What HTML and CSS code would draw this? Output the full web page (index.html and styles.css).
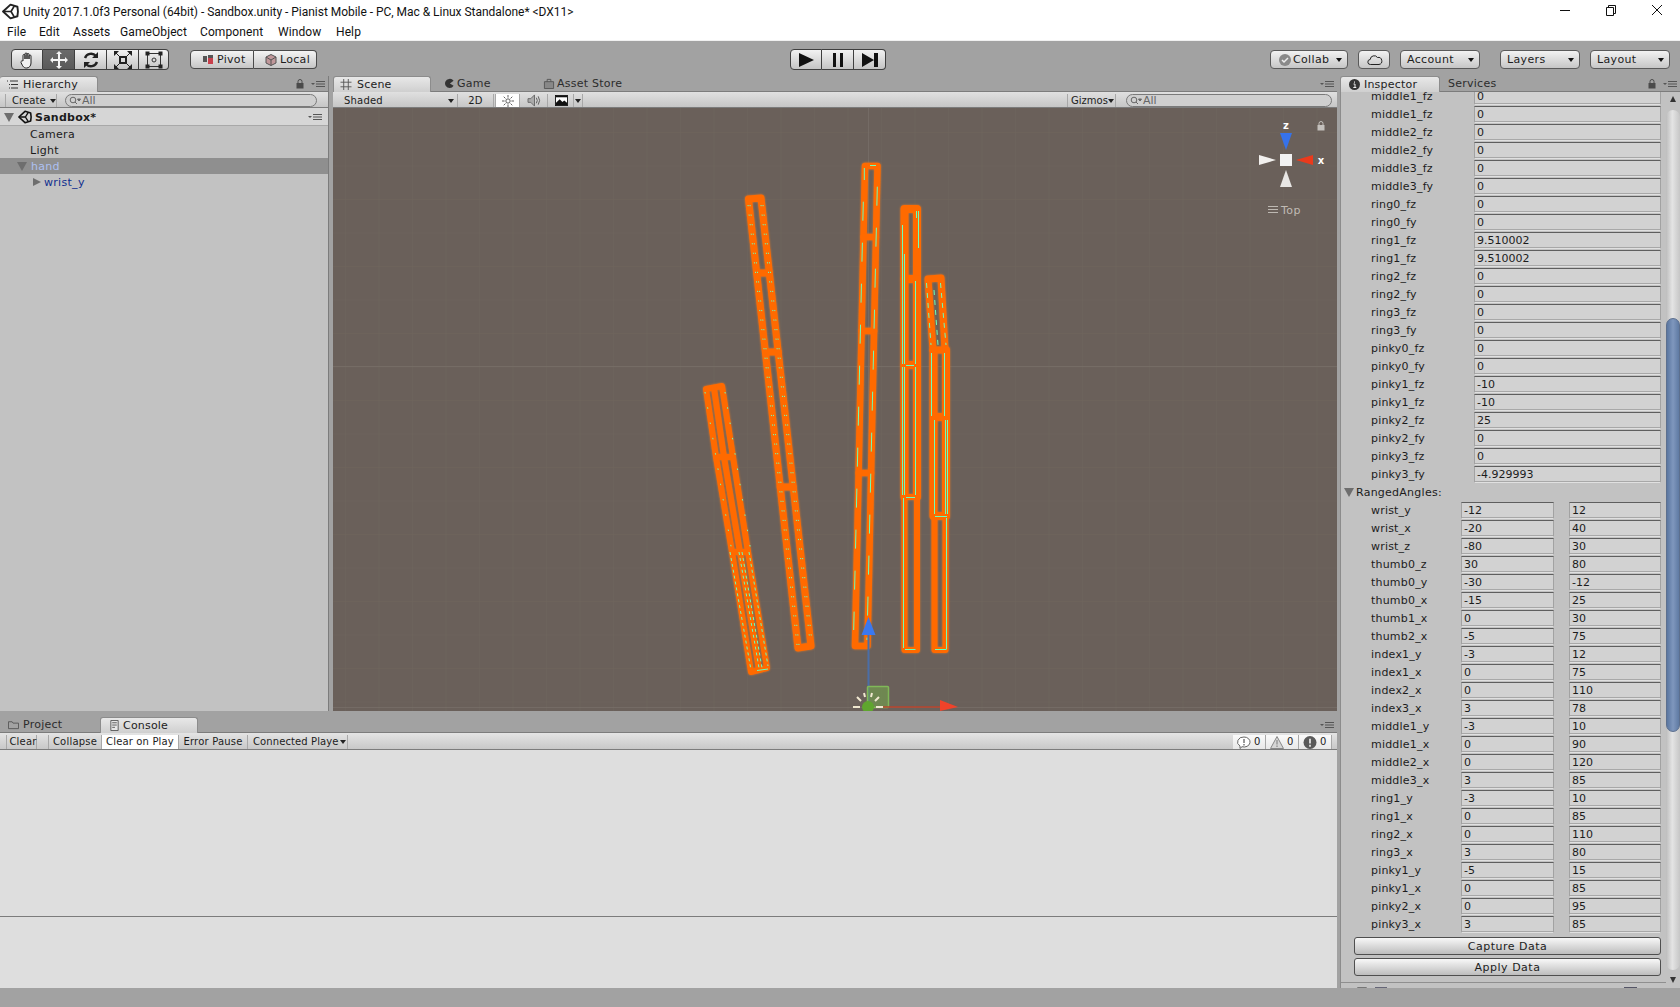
FILE: index.html
```html
<!DOCTYPE html>
<html lang="en">
<head>
<meta charset="utf-8">
<title>Unity 2017.1.0f3 Personal (64bit)</title>
<link rel="stylesheet" href="styles.css">
</head>
<body>
<svg class="defs" width="0" height="0" aria-hidden="true">
  <symbol id="menu" viewBox="0 0 14 8">
    <path d="M0 3h4L2 5z" fill="#555"/><path d="M5 1.500h9M5 4h9M5 6.500h9" stroke="#555" stroke-width="1" fill="none"/>
  </symbol>
  <symbol id="lock" viewBox="0 0 8 10">
    <path d="M2 4V2.500a2 2 0 0 1 4 0V4" fill="none" stroke="currentColor" stroke-width="1"/><rect x="0.500" y="4" width="7" height="5.500" fill="currentColor"/>
  </symbol>
  <symbol id="unity" viewBox="0 0 16 16">
    <path d="M8 1.500 14.500 3.500 15 8 14.500 12.500 8 14.500 1 8z" fill="none" stroke="currentColor" stroke-width="1.800" stroke-linejoin="round"/>
    <path d="M1.500 8H8.500M8.500 8 11.500 3M8.500 8 11.500 13" stroke="currentColor" stroke-width="1.600" fill="none"/>
  </symbol>
</svg>

<header class="titlebar">
  <svg class="title-logo"><use href="#unity"/></svg>
  <span class="title-text">Unity 2017.1.0f3 Personal (64bit) - Sandbox.unity - Pianist Mobile - PC, Mac &amp; Linux Standalone* &lt;DX11&gt;</span>
  <div class="winbtns">
    <svg class="winbtn" viewBox="0 0 46 20"><path d="M18 10.500h10" stroke="#111" fill="none"/></svg>
    <svg class="winbtn" viewBox="0 0 46 20"><path d="M18.500 7.500h7v8h-7zM20.500 7.500v-2h7v8h-2" stroke="#111" fill="none"/></svg>
    <svg class="winbtn" viewBox="0 0 46 20"><path d="M18 5l10 10M28 5l-10 10" stroke="#111" fill="none"/></svg>
  </div>
</header>

<nav class="menubar">
  <span class="m-file">File</span><span class="m-edit">Edit</span><span class="m-assets">Assets</span><span class="m-go">GameObject</span><span class="m-comp">Component</span><span class="m-win">Window</span><span>Help</span>
</nav>

<section class="toolbar">
  <div class="btngroup tools">
    <button class="tb"><svg viewBox="0 0 20 20"><path d="M6 11V5.500a1 1 0 0 1 2 0V9 4a1 1 0 0 1 2 0v5-4.500a1 1 0 0 1 2 0V9 6a1 1 0 0 1 2 0v7c0 3-2 5-4.500 5S6 17 4 12.500c-.5-1.500 1.500-2 2-1.500z" fill="#f2f2f2" stroke="#222"/></svg></button>
    <button class="tb tb-on"><svg viewBox="0 0 20 20"><path d="M10 1l3 3h-2v5h5V7l3 3-3 3v-2h-5v5h2l-3 3-3-3h2v-5H4v2l-3-3 3-3v2h5V4H7z" fill="#f4f4f4"/></svg></button>
    <button class="tb"><svg viewBox="0 0 20 20"><path d="M4 8a6.500 6.500 0 0 1 11-2M16 12a6.500 6.500 0 0 1-11 2" fill="none" stroke="#222" stroke-width="2.400"/><path d="M17 2v6h-6zM3 18v-6h6z" fill="#222"/></svg></button>
    <button class="tb"><svg viewBox="0 0 20 20"><rect x="7" y="7" width="6" height="6" fill="none" stroke="#222" stroke-width="2"/><path d="M1 1h5L1 6zM19 1v5l-5-5zM1 19v-5l5 5zM19 19h-5l5-5z" fill="#222"/><path d="M3 3l4 4M17 3l-4 4M3 17l4-4M17 17l-4-4" stroke="#222"/></svg></button>
    <button class="tb"><svg viewBox="0 0 20 20"><path d="M3.500 3v14M16.500 3v14M3 3.500h14M3 16.500h14" stroke="#333"/><circle cx="10" cy="10" r="2" fill="none" stroke="#333"/><path d="M1.500 1.500h4v4h-4zM14.500 1.500h4v4h-4zM1.500 14.500h4v4h-4zM14.500 14.500h4v4h-4z" fill="#222"/></svg></button>
  </div>
  <div class="btngroup pivots">
    <button class="pb pb-pivot"><svg class="pico" viewBox="0 0 12 12"><rect x="1" y="2" width="4" height="6" fill="#555"/><rect x="6" y="1" width="5" height="9" fill="#555"/><rect x="6" y="4" width="5" height="6" fill="#c8404c"/></svg>Pivot</button>
    <button class="pb pb-local"><svg class="pico" viewBox="0 0 12 12"><path d="M6 .5 11 3v6L6 11.500 1 9V3z" fill="#c0979a" stroke="#555"/><path d="M1 3l5 3 5-3M6 6v5.500" stroke="#555" fill="none"/></svg>Local</button>
  </div>
  <div class="btngroup play">
    <button class="pl"><svg viewBox="0 0 18 14"><path d="M2 0 17 7 2 14z" fill="#111"/></svg></button>
    <button class="pl"><svg viewBox="0 0 18 14"><path d="M4 0h3v14H4zM11 0h3v14h-3z" fill="#111"/></svg></button>
    <button class="pl"><svg viewBox="0 0 18 14"><path d="M1 0 13 7 1 14zM13 0h4v14h-4z" fill="#111"/></svg></button>
  </div>
  <div class="right-tools">
    <button class="dd dd-collab"><svg class="pico" viewBox="0 0 12 12"><circle cx="6" cy="6" r="6" fill="#8a8a8a"/><path d="M3 6l2 2 4-4" stroke="#eee" stroke-width="1.500" fill="none"/></svg>Collab<i class="tri tri-k"></i></button>
    <button class="dd dd-cloud"><svg viewBox="0 0 16 10"><path d="M3.500 9.500a2.500 2.500 0 0 1-.3-5A4 4 0 0 1 10.500 2.500 3.500 3.500 0 0 1 12 9.500z" fill="none" stroke="#222"/></svg></button>
    <button class="dd dd-acc">Account<i class="tri tri-k"></i></button>
    <button class="dd dd-lay">Layers<i class="tri tri-k"></i></button>
    <button class="dd dd-lout">Layout<i class="tri tri-k"></i></button>
  </div>
</section>

<main class="dock">
  <div class="left">
    <div class="top">
      <section class="hier">
        <div class="tabbar">
          <div class="tab tab-hier"><svg class="tabico" viewBox="0 0 12 10"><path d="M1 1.500h1M4 1.500h8M3 5h1M5 5h7M3 8.500h1M5 8.500h7" stroke="#333" fill="none"/></svg>Hierarchy</div>
          <div class="tabtools"><svg class="ic-lock"><use href="#lock"/></svg><svg class="ic-menu"><use href="#menu"/></svg></div>
        </div>
        <div class="subbar">
          <div class="sb-btn sb-create">Create<i class="tri"></i></div>
          <div class="search search-h"><svg class="sico" viewBox="0 0 12 10"><circle cx="4" cy="4" r="2.800" fill="none" stroke="#666"/><path d="M6 6l2 2M8.500 3h3L10 5z" stroke="#666" fill="#666"/></svg>All</div>
        </div>
        <div class="hrow-scene">
          <i class="arrow-down"></i>
          <svg class="scene-logo"><use href="#unity"/></svg>
          <b>Sandbox*</b>
          <svg class="ic-menu ic-menu-end"><use href="#menu"/></svg>
        </div>
        <div class="hrow hrow-l1">Camera</div>
        <div class="hrow hrow-l1">Light</div>
        <div class="hrow hrow-sel"><i class="arrow-down arrow-sm"></i><span>hand</span></div>
        <div class="hrow hrow-l2"><i class="arrow-right"></i><span>wrist_y</span></div>
      </section>
      <section class="scene">
        <div class="tabbar">
          <div class="tab tab-scene"><svg class="tabico" viewBox="0 0 12 12"><path d="M3.500 0v12M8.500 0v12M0 3.500h12M0 8.500h12" stroke="#555" fill="none"/></svg>Scene</div>
          <div class="tab-off tab-game"><svg class="tabico" viewBox="0 0 12 12"><path d="M6 1a5 5 0 1 0 5 7.500L7 6l4-3A5 5 0 0 0 6 1z" fill="#333"/></svg>Game</div>
          <div class="tab-off tab-store"><svg class="tabico" viewBox="0 0 12 12"><path d="M1 4h10v7.500H1z" fill="#888" stroke="#555"/><path d="M4 4V1.500h4V4" fill="none" stroke="#555"/></svg>Asset Store</div>
          <div class="tabtools tabtools-end"><svg class="ic-menu"><use href="#menu"/></svg></div>
        </div>
        <div class="subbar subbar-scene">
          <div class="sb-btn sb-shaded">Shaded<i class="tri"></i></div>
          <div class="sb-btn sb-2d">2D</div>
          <div class="sb-btn sb-sun"><svg viewBox="0 0 14 14"><circle cx="7" cy="7" r="2.500" fill="none" stroke="#444"/><path d="M7 0v3M7 11v3M0 7h3M11 7h3M2 2l2 2M10 10l2 2M12 2l-2 2M4 10l-2 2" stroke="#444" fill="none"/></svg></div>
          <div class="sb-btn sb-audio"><svg viewBox="0 0 16 14"><path d="M1 5h3l4-4v12L4 9H1z" fill="#aaa" stroke="#666"/><path d="M10 4q2 3 0 6M12 2.500q3 4.500 0 9" fill="none" stroke="#555"/></svg></div>
          <div class="sb-btn sb-img"><svg viewBox="0 0 14 12"><rect x=".5" y=".5" width="13" height="11" fill="#fff" stroke="#111"/><path d="M1 11V8.500L5 4.500 8 7.500 10 6 13 8.500V11z" fill="#111"/><path d="M1 1h12v1.500H1z" fill="#111"/></svg></div>
          <div class="sb-btn sb-imgdd"><i class="tri"></i></div>
          <div class="sb-fill"></div>
          <div class="sb-btn sb-gizmos">Gizmos<i class="tri"></i></div>
          <div class="search search-s"><svg class="sico" viewBox="0 0 12 10"><circle cx="4" cy="4" r="2.800" fill="none" stroke="#666"/><path d="M6 6l2 2M8.500 3h3L10 5z" stroke="#666" fill="#666"/></svg>All</div>
        </div>
        <svg class="view" viewBox="333 108 1004 603" preserveAspectRatio="none">
          <defs>
            <pattern id="grid" x="345" y="132" width="33.500" height="33.500" patternUnits="userSpaceOnUse">
              <path d="M0 0V33.500M0 0H33.500" stroke="#72695f" stroke-opacity=".55" fill="none"/>
            </pattern>
          </defs>
          <rect x="333" y="108" width="1004" height="603" fill="url(#grid)"/>
          <path class="major" d="M333 366.500H1337M868.500 108V711M333 707.500H1337"/>

          <g class="fingers">
            <!-- thumb -->
            <g class="leg6">
              <path d="M706 389 716 457 732 552 751 672 767 668 748 552 733 457 722 386Z"/>
              <path d="M714 388 724 457 740 552 759 670"/>
              <path d="M716 457H733M732 552H748"/>
            </g>
            <!-- index -->
            <g class="leg7">
              <path d="M748.500 199 761 198 811 646 798 648Z"/>
              <path d="M756.700 273H769.400M765.400 352H778.200M780.200 487H793.200"/>
            </g>
            <!-- middle -->
            <g class="leg65">
              <path d="M865 166H877.500L867.500 646H855Z"/>
              <path d="M863.500 237H876M861.600 331H874.100M858.600 473H871.100"/>
            </g>
            <!-- ring -->
            <g class="leg8">
              <path d="M904.500 497V209H917V497"/>
              <path d="M904.500 279H917M904.500 365H917"/>
            </g>
            <g class="leg6">
              <path d="M904.500 497H917V650H904.500Z"/>
            </g>
            <!-- pinky -->
            <g class="leg7">
              <path d="M933 350 928 279 941 278 945 350"/>
              <path d="M933 350H946"/>
            </g>
            <g class="leg8">
              <path d="M933.500 516V350M946 516V350M933.500 417H946M933.500 516H946"/>
            </g>
            <g class="leg6">
              <path d="M934.500 516V650H945.500V516"/>
            </g>
          </g>

          <g class="cyan">
            <!-- middle dashes -->
            <path class="d-mid" d="M864.300 168V180"/>
            <path class="d-mid-line" d="M863.300 201.700 853.700 630"/>
            <path class="d-mid-line" d="M877.300 186.700 867 640"/>
            <path d="M870 165.500H876"/>
            <!-- ring lines -->
            <path d="M902.500 225V364M902.500 367V495M904.500 254V364M904.500 367V495M915.500 281V364M915.500 367V495M918.500 211V248M916.500 211V218"/>
            <path d="M903.500 498V648M905 649.500H915.500M906 365.500H914M906 497.500H915"/>
            <!-- pinky lines -->
            <path d="M931.500 353V416M944.500 353V416M934.500 420V514M945.500 420V514M947.500 420V514"/>
            <path d="M946.500 518V649M935 649.500H946.500M935 516.500H947"/>
            <path class="d-pk" d="M926.500 283 931 345"/>
            <path class="d-pk" d="M940.500 283 946 345"/>
            <path class="d-pk" d="M934 290 938 345"/>
            <!-- index dots -->
            <path class="d-dot" d="M748 205 797 645"/><path class="d-dot" d="M750 205 799 645"/>
            <path class="d-dot" d="M761 205 810 642"/><path class="d-dot" d="M763 205 812 642"/>
            <!-- thumb dots -->
            <path class="d-dot2" d="M705 392 732 552"/>
            <path class="d-dot2" d="M725 392 751 552"/>
            <path class="d-dash" d="M730 552 751 670"/>
            <path class="d-dash" d="M739 552 759 668"/>
            <path class="d-dash" d="M742 552 762 668"/>
            <path class="d-dash" d="M749 552 768 666"/>
            <path d="M757 670.500 768 669"/>
          </g>

          <!-- move gizmo -->
          <path class="axis-blue" d="M868.500 635V706"/>
          <path class="arrow-blue" d="M868.500 617 861.500 635H875.500Z"/>
          <rect class="plane" x="867.500" y="686.500" width="21" height="21" rx="1"/>
          <path class="axis-red" d="M880 707H942"/>
          <path class="arrow-red" d="M940 700 958 707 940 711Z"/>
          <circle class="light-c" cx="868" cy="707" r="6"/>
          <path class="rays" d="M853 707H860M876 707H883M857 697l4 4M879 697l-4 4M864 693l1 4M872 693l-1 4"/>

          <!-- view gizmo -->
          <path class="vg-blue" d="M1280 133H1292L1286 150Z"/>
          <path class="vg-white" d="M1259 155V165L1276 160Z"/>
          <path class="vg-red" d="M1313 155V165L1296 160Z"/>
          <path class="vg-white2" d="M1286 170 1280 187H1292Z"/>
          <rect class="vg-cube" x="1280" y="154" width="12" height="12"/>
          <text class="vg-lab" x="1286" y="129">z</text>
          <text class="vg-lab" x="1321" y="164">x</text>
          <svg x="1317" y="121" width="8" height="10" class="vg-lock"><use href="#lock"/></svg>
          <path class="vg-lines" d="M1268 206.500H1278M1268 209.500H1278M1268 212.500H1278"/>
          <text class="vg-top" x="1281" y="214">Top</text>
        </svg>
      </section>
    </div>
    <section class="bottom">
      <div class="tabbar tabbar-b">
        <div class="tab-off tab-project"><svg class="tabico" viewBox="0 0 12 10"><path d="M.5 2h4l1 1.500h6v6H.5z" fill="none" stroke="#555"/></svg>Project</div>
        <div class="tab tab-console"><svg class="tabico" viewBox="0 0 9 12"><path d="M.5.5h8v11h-8z" fill="#e6e6e6" stroke="#555"/><path d="M2 3h5M2 5.500h5M2 8h3" stroke="#555"/></svg>Console</div>
        <div class="tabtools tabtools-end"><svg class="ic-menu"><use href="#menu"/></svg></div>
      </div>
      <div class="subbar subbar-console">
        <div class="sb-btn c-clear">Clear</div>
        <div class="sb-btn c-collapse">Collapse</div>
        <div class="sb-btn c-cop">Clear on Play</div>
        <div class="sb-btn c-err">Error Pause</div>
        <div class="sb-btn c-conn"><span class="clip">Connected Player</span><i class="tri"></i></div>
        <div class="sb-fill"></div>
        <div class="sb-btn c-count"><svg viewBox="0 0 14 13"><path d="M7 1a6 5 0 1 1-2 9.700L3 12.500V10A6 5 0 0 1 7 1z" fill="#fff" stroke="#666"/><path d="M7 3v4M7 8v1.500" stroke="#777" stroke-width="1.500"/></svg>0</div>
        <div class="sb-btn c-count"><svg viewBox="0 0 14 13"><path d="M7 .5 13.500 12.500H.5z" fill="#d6d6d6" stroke="#888"/><path d="M7 4v4.500M7 9.500V11" stroke="#999" stroke-width="1.500"/></svg>0</div>
        <div class="sb-btn c-count"><svg viewBox="0 0 14 14"><circle cx="7" cy="7" r="7" fill="#5a5a5a"/><path d="M7 3v5M7 9.500V11.500" stroke="#ddd" stroke-width="2"/></svg>0</div>
      </div>
      <div class="log"></div>
      <div class="log-detail"></div>
    </section>
  </div>

  <aside class="insp">
    <div class="tabbar tabbar-i">
      <div class="tab tab-insp"><svg class="tabico" viewBox="0 0 11 11"><circle cx="5.500" cy="5.500" r="5.500" fill="#333"/><path d="M5.500 2.500v1.200M4.500 5H6v3.500M4.300 8.500h3" stroke="#eee" fill="none"/></svg>Inspector</div>
      <div class="tab-off tab-serv">Services</div>
      <div class="tabtools tabtools-end"><svg class="ic-lock"><use href="#lock"/></svg><svg class="ic-menu"><use href="#menu"/></svg></div>
    </div>
    <div class="ibody">
      <div class="icontent">
        <div class="rows">
          <div class="row"><label>middle1_fz</label><span class="f">0</span></div>
          <div class="row"><label>middle1_fz</label><span class="f">0</span></div>
          <div class="row"><label>middle2_fz</label><span class="f">0</span></div>
          <div class="row"><label>middle2_fy</label><span class="f">0</span></div>
          <div class="row"><label>middle3_fz</label><span class="f">0</span></div>
          <div class="row"><label>middle3_fy</label><span class="f">0</span></div>
          <div class="row"><label>ring0_fz</label><span class="f">0</span></div>
          <div class="row"><label>ring0_fy</label><span class="f">0</span></div>
          <div class="row"><label>ring1_fz</label><span class="f">9.510002</span></div>
          <div class="row"><label>ring1_fz</label><span class="f">9.510002</span></div>
          <div class="row"><label>ring2_fz</label><span class="f">0</span></div>
          <div class="row"><label>ring2_fy</label><span class="f">0</span></div>
          <div class="row"><label>ring3_fz</label><span class="f">0</span></div>
          <div class="row"><label>ring3_fy</label><span class="f">0</span></div>
          <div class="row"><label>pinky0_fz</label><span class="f">0</span></div>
          <div class="row"><label>pinky0_fy</label><span class="f">0</span></div>
          <div class="row"><label>pinky1_fz</label><span class="f">-10</span></div>
          <div class="row"><label>pinky1_fz</label><span class="f">-10</span></div>
          <div class="row"><label>pinky2_fz</label><span class="f">25</span></div>
          <div class="row"><label>pinky2_fy</label><span class="f">0</span></div>
          <div class="row"><label>pinky3_fz</label><span class="f">0</span></div>
          <div class="row"><label>pinky3_fy</label><span class="f">-4.929993</span></div>
          <div class="row row-head"><i class="arrow-down arrow-sm"></i>RangedAngles:</div>
          <div class="row r2"><label>wrist_y</label><span class="f">-12</span><span class="f">12</span></div>
          <div class="row r2"><label>wrist_x</label><span class="f">-20</span><span class="f">40</span></div>
          <div class="row r2"><label>wrist_z</label><span class="f">-80</span><span class="f">30</span></div>
          <div class="row r2"><label>thumb0_z</label><span class="f">30</span><span class="f">80</span></div>
          <div class="row r2"><label>thumb0_y</label><span class="f">-30</span><span class="f">-12</span></div>
          <div class="row r2"><label>thumb0_x</label><span class="f">-15</span><span class="f">25</span></div>
          <div class="row r2"><label>thumb1_x</label><span class="f">0</span><span class="f">30</span></div>
          <div class="row r2"><label>thumb2_x</label><span class="f">-5</span><span class="f">75</span></div>
          <div class="row r2"><label>index1_y</label><span class="f">-3</span><span class="f">12</span></div>
          <div class="row r2"><label>index1_x</label><span class="f">0</span><span class="f">75</span></div>
          <div class="row r2"><label>index2_x</label><span class="f">0</span><span class="f">110</span></div>
          <div class="row r2"><label>index3_x</label><span class="f">3</span><span class="f">78</span></div>
          <div class="row r2"><label>middle1_y</label><span class="f">-3</span><span class="f">10</span></div>
          <div class="row r2"><label>middle1_x</label><span class="f">0</span><span class="f">90</span></div>
          <div class="row r2"><label>middle2_x</label><span class="f">0</span><span class="f">120</span></div>
          <div class="row r2"><label>middle3_x</label><span class="f">3</span><span class="f">85</span></div>
          <div class="row r2"><label>ring1_y</label><span class="f">-3</span><span class="f">10</span></div>
          <div class="row r2"><label>ring1_x</label><span class="f">0</span><span class="f">85</span></div>
          <div class="row r2"><label>ring2_x</label><span class="f">0</span><span class="f">110</span></div>
          <div class="row r2"><label>ring3_x</label><span class="f">3</span><span class="f">80</span></div>
          <div class="row r2"><label>pinky1_y</label><span class="f">-5</span><span class="f">15</span></div>
          <div class="row r2"><label>pinky1_x</label><span class="f">0</span><span class="f">85</span></div>
          <div class="row r2"><label>pinky2_x</label><span class="f">0</span><span class="f">95</span></div>
          <div class="row r2"><label>pinky3_x</label><span class="f">3</span><span class="f">85</span></div>
        </div>
        <button class="ibtn ibtn-first">Capture Data</button>
        <button class="ibtn">Apply Data</button>
        <div class="compfoot">
          <svg class="cf-doc" viewBox="0 0 13 8"><path d="M.5 8V.5h9l3 3V8" fill="#eee" stroke="#777"/></svg>
          <svg class="cf-chk" viewBox="0 0 12 8"><rect x=".5" y=".5" width="11" height="8" fill="#c6d4e4" stroke="#667"/></svg>
          <span class="cf-fill"></span>
          <svg class="cf-blue" viewBox="0 0 13 8"><rect x=".5" y=".5" width="12" height="8" fill="#b8cce0" stroke="#556"/></svg>
          <svg class="cf-gear" viewBox="0 0 8 8"><path d="M2 1h4v7H2z" fill="#666"/></svg>
        </div>
      </div>
      <div class="scrollbar">
        <i class="sc-up"></i>
        <div class="sc-track">
          <div class="sc-thumb"></div>
        </div>
        <i class="sc-down"></i>
      </div>
    </div>
  </aside>
</main>
<footer class="status"></footer>
</body>
</html>
```
FILE: styles.css
```css
* { box-sizing: border-box; }
html, body { margin: 0; padding: 0; }
body {
  width: 1680px; height: 1007px; overflow: hidden;
  display: flex; flex-direction: column;
  background: #a2a2a2; color: #1c1c1c;
  font: 11px/1 "DejaVu Sans", sans-serif;
}
button { font: inherit; color: inherit; padding: 0; margin: 0; }
i { display: block; font-style: normal; }
svg { display: block; flex: none; }
.defs { position: absolute; }

/* title bar */
.titlebar { height: 20px; background: #fff; display: flex; align-items: center; padding-left: 2px; flex: none; }
.title-logo { width: 17px; height: 17px; color: #222; margin-right: 4px; margin-top: 2px; }
.title-text { font: 12px/20px Roboto, sans-serif; color: #111; white-space: nowrap; margin-top: 3px; letter-spacing: -.03px; }
.winbtns { margin-left: auto; display: flex; }
.winbtn { width: 46px; height: 20px; }

/* menu bar */
.menubar { height: 21px; background: #fff; border-bottom: 1px solid #f0f0f0; display: flex; align-items: center; padding: 3px 0 0 7px; flex: none; font: 12px/18px Roboto, sans-serif; color: #111; letter-spacing: .1px; }
.m-file { width: 32px; } .m-edit { width: 34px; } .m-assets { width: 47px; } .m-go { width: 80px; } .m-comp { width: 78px; } .m-win { width: 58px; }

/* main toolbar */
.toolbar { height: 35px; flex: none; display: flex; align-items: flex-start; background: #a2a2a2; position: relative; padding-left: 11px; }
.btngroup { display: flex; }
.tools { margin-top: 8px; height: 21px; }
.tb { width: 32px; height: 21px; border: 1px solid #3f3f3f; border-left-width: 0; background: linear-gradient(#f4f4f4, #c4c4c4); display: flex; align-items: center; justify-content: center; }
.tb:first-child { border-left-width: 1px; border-radius: 4px 0 0 4px; }
.tb:last-child { border-radius: 0 4px 4px 0; width: 30px; }
.tb svg { width: 20px; height: 20px; }
.tb-on { background: linear-gradient(#6a6a6a, #5a5a5a); }
.pivots { margin: 9px 0 0 21px; height: 19px; }
.pb { height: 19px; border: 1px solid #4a4a4a; background: linear-gradient(#f4f4f4, #c6c6c6); display: flex; align-items: center; letter-spacing: .3px; }
.pico { width: 12px; height: 12px; margin-right: 3px; }
.pb-pivot { width: 64px; border-radius: 4px 0 0 4px; padding-left: 11px; }
.pb-local { width: 63px; border-left-width: 0; border-radius: 0 4px 4px 0; padding-left: 11px; }
.play { margin: 8px 0 0 473px; height: 21px; }
.pl { width: 32px; height: 21px; border: 1px solid #3f3f3f; border-left-width: 0; background: linear-gradient(#f2f2f2, #c4c4c4); display: flex; align-items: center; justify-content: center; }
.pl:first-child { border-left-width: 1px; border-radius: 4px 0 0 4px; }
.pl:last-child { border-radius: 0 4px 4px 0; }
.pl svg { width: 18px; height: 14px; }
.right-tools { margin: 9px 0 0 384px; display: flex; }
.dd { height: 19px; border: 1px solid #5a5a5a; border-radius: 4px; background: linear-gradient(#f2f2f2, #c6c6c6); display: flex; align-items: center; letter-spacing: .35px; padding-left: 6px; position: relative; }
.dd .tri { margin-left: auto; margin-right: 5px; }
.tri { width: 0; height: 0; border: 3px solid transparent; border-top: 4px solid #222; border-bottom-width: 0; }
.tri-k { border-top-color: #111; }
.dd-collab { width: 78px; margin-right: 10px; padding-left: 8px; }
.dd-collab .pico { margin-right: 2px; }
.dd-cloud { width: 32px; margin-right: 10px; padding-left: 8px; }
.dd-cloud svg { width: 16px; height: 10px; }
.dd-acc { width: 80px; margin-right: 20px; }
.dd-lay { width: 80px; margin-right: 10px; }
.dd-lout { width: 80px; }

/* dock layout */
.dock { height: 912px; flex: none; display: flex; }
.left { width: 1340px; display: flex; flex-direction: column; }
.top { height: 635px; display: flex; }
.tabbar { height: 16px; display: flex; position: relative; background: #a2a2a2; border-bottom: 1px solid #7c7c7c; flex: none; align-items: flex-end; }
.tab { height: 16px; background: linear-gradient(#e8e8e8, #cfcfcf); border: 1px solid #8c8c8c; border-bottom: 0; border-radius: 3px 3px 0 0; display: flex; align-items: center; letter-spacing: .2px; color: #222; margin-bottom: -1px; }
.tab-off { height: 16px; display: flex; align-items: center; letter-spacing: .25px; color: #2c2c2c; }
.tabico { width: 12px; height: 11px; margin-right: 5px; }
.tabtools { margin-left: auto; display: flex; align-items: center; height: 15px; gap: 7px; padding-right: 3px; }
.ic-lock { width: 8px; height: 10px; color: #4a4a4a; }
.ic-menu { width: 14px; height: 8px; }

/* hierarchy */
.hier { width: 329px; background: #c2c2c2; border-right: 1px solid #7c7c7c; display: flex; flex-direction: column; flex: none; }
.tab-hier { width: 98px; padding-left: 6px; border-left: 0; }
.subbar { height: 16px; flex: none; display: flex; align-items: center; padding-left: 5px; padding-top: 2px; background: linear-gradient(#e0e0e0, #c6c6c6); border-bottom: 1px solid #7c7c7c; }
.sb-btn { height: 13px; display: flex; align-items: center; letter-spacing: .2px; font-size: 10px; border-right: 1px solid #a8a8a8; }
.sb-create { width: 52px; padding-left: 6px; border-left: 1px solid #a8a8a8; gap: 4px; letter-spacing: .1px; }
.search { height: 13px; border: 1px solid #7a7a7a; border-radius: 7px; background: #cfcfcf; display: flex; align-items: center; color: #666; padding-left: 3px; font-size: 11px; }
.sico { width: 12px; height: 10px; margin-right: 1px; }
.search-h { width: 252px; margin-left: 8px; }
.hrow-scene { height: 18px; background: #d6d6d6; border-bottom: 1px solid #a8a8a8; display: flex; align-items: center; padding: 1px 0 0 4px; flex: none; font-family: "DejaVu Sans", sans-serif; letter-spacing: .25px; }
.arrow-down { width: 0; height: 0; border: 5px solid transparent; border-top: 9px solid #6e6e6e; border-bottom-width: 0; }
.arrow-sm { margin-right: 4px; }
.arrow-right { width: 0; height: 0; border: 4.5px solid transparent; border-left: 8px solid #6e6e6e; border-right-width: 0; margin-right: 4px; }
.scene-logo { width: 14px; height: 14px; margin: 0 3px 0 4px; color: #111; }
.ic-menu-end { margin-left: auto; margin-right: 6px; }
.hrow { height: 16px; display: flex; align-items: center; letter-spacing: .3px; flex: none; }
.hrow-l1 { padding-left: 30px; }
.hrow-sel { background: #8f8f8f; padding-left: 17px; color: #adc0f2; }
.hrow-l2 { padding-left: 33px; color: #102f8f; }
.hrow-l2 span { margin-left: -1px; }

/* scene */
.scene { width: 1004px; margin-left: 4px; display: flex; flex-direction: column; flex: none; }
.tab-scene { width: 98px; padding-left: 6px; }
.tab-game { margin-left: 12px; width: 101px; }
.tab-game .tabico { margin-right: 2px; }
.tab-store .tabico { margin-right: 2px; }
.tab-store { margin-left: -1px; }
.tabtools-end { padding-right: 3px; }
.subbar-scene { padding-left: 0; }
.sb-shaded { width: 125px; padding-left: 11px; padding-right: 3px; justify-content: space-between; }
.sb-2d { width: 36px; justify-content: center; }
.sb-sun { width: 25px; margin-left: 1px; background: #fff; justify-content: center; border-left: 1px solid #a8a8a8; }
.sb-sun svg { width: 12px; height: 12px; }
.sb-audio { width: 26px; margin-left: 2px; justify-content: center; }
.sb-audio svg { width: 15px; height: 13px; }
.sb-img { width: 24px; margin-left: 1px; justify-content: center; border-right: 0; }
.sb-img svg { width: 13px; height: 11px; }
.sb-imgdd { width: 10px; justify-content: center; border-left: 1px solid #a8a8a8; }
.sb-fill { flex: 1; }
.sb-gizmos { width: 49px; padding-left: 3px; border-left: 1px solid #a8a8a8; justify-content: space-between; padding-right: 3px; letter-spacing: 0; }
.search-s { width: 206px; margin: 0 5px 0 10px; }
.view { width: 1004px; height: 603px; background: #6a605a; }
.major { stroke: #79716a; stroke-opacity: .7; fill: none; }

/* hand */
.fingers { fill: none; stroke: #ff6a00; stroke-linejoin: round; stroke-linecap: round; filter: drop-shadow(0 0 1px #d8762a); }
.leg6 { stroke-width: 6; }
.leg65 { stroke-width: 6.500; }
.leg7 { stroke-width: 7; }
.leg8 { stroke-width: 8; }
.cyan { fill: none; stroke: #6dffb8; stroke-width: 1; }
.d-mid-line { stroke-dasharray: 19 22; }
.d-mid { stroke-width: 1; }
.d-pk { stroke-dasharray: 5 5; }
.d-dot { stroke-dasharray: 1.200 8.400; }
.d-dot2 { stroke-dasharray: 1.500 14; }
.d-dash { stroke-dasharray: 3 3; }

/* gizmos */
.axis-blue { stroke: #4a6ea8; stroke-width: 2; fill: none; }
.arrow-blue { fill: #3a78f0; }
.plane { fill: #72a84a; fill-opacity: .55; stroke: #80b858; stroke-width: 1.500; }
.axis-red { stroke: #b8442e; stroke-width: 1.500; fill: none; }
.arrow-red { fill: #f0432a; }
.light-c { fill: #5fa52e; }
.rays { stroke: #f0e8d0; stroke-width: 2; fill: none; }
.vg-blue { fill: #3672ea; }
.vg-white { fill: #f2f0ee; }
.vg-white2 { fill: #e8e6e4; }
.vg-red { fill: #ea3a1c; }
.vg-cube { fill: #f2f2f2; }
.vg-lab { font: bold 10px "DejaVu Sans", sans-serif; fill: #fff; text-anchor: middle; }
.vg-lock { color: #c4c0bc; }
.vg-lines { stroke: #bdb8b2; fill: none; }
.vg-top { font: 11px "DejaVu Sans", sans-serif; fill: #c0bbb5; letter-spacing: .4px; }

/* console */
.bottom { margin-top: 6px; width: 1337px; height: 271px; display: flex; flex-direction: column; }
.tab-project { width: 100px; padding-left: 8px; }
.tab-project .tabico { width: 11px; margin-right: 4px; }
.tab-console { width: 98px; padding-left: 9px; }
.tab-console .tabico { width: 9px; margin-right: 4px; }
.subbar-console { height: 17px; padding-left: 6px; background: linear-gradient(#e4e4e4, #c8c8c8); }
.subbar-console .sb-btn { height: 14px; font-size: 10px; }
.c-clear { width: 31px; justify-content: center; border-left: 1px solid #a8a8a8; padding-left: 3px; }
.c-collapse { width: 54px; margin-left: 11px; justify-content: center; border-left: 1px solid #a8a8a8; }
.c-cop { width: 77px; background: #fff; justify-content: center; letter-spacing: .15px; }
.c-err { width: 69px; justify-content: center; }
.c-conn { width: 100px; padding-left: 5px; letter-spacing: .1px; }
.clip { width: 86px; overflow: hidden; white-space: nowrap; }
.c-conn .tri { margin-left: 1px; }
.c-count { width: 33px; background: linear-gradient(#fafafa, #e8e8e8); padding-left: 4px; gap: 3px; }
.c-count svg { width: 14px; height: 13px; }
.c-count:last-child { margin-right: 5px; }
.log { height: 167px; background: #dedede; border-bottom: 1px solid #7c7c7c; flex: none; }
.log-detail { flex: 1; background: #dedede; }

/* inspector */
.insp { width: 340px; display: flex; flex-direction: column; flex: none; }
.tab-insp { width: 100px; padding-left: 8px; }
.tab-insp .tabico { width: 11px; margin-right: 4px; }
.tab-serv { margin-left: 8px; }
.ibody { flex: 1; min-height: 0; display: flex; background: #c2c2c2; border-left: 1px solid #8c8c8c; overflow: hidden; }
.icontent { width: 325px; height: 896px; overflow: hidden; flex: none; }
.rows { margin-top: -5px; }
.row { height: 18px; display: flex; align-items: center; padding-right: 4px; letter-spacing: .2px; }
.row label { width: 102px; padding-left: 30px; white-space: nowrap; flex: none; }
.r2 label { width: 89px; }
.f { flex: none; width: 187px; margin-left: 31px; height: 17px; background: #d2d2d2; border: 1px solid #a2a2a2; border-top: 1px solid #5e5e5e; border-bottom: 1px solid #e0e0e0; box-shadow: inset 0 -1px 0 #a8a8a8; padding-left: 2px; line-height: 16px; letter-spacing: 0; }
.r2 .f { width: 93px; }
.r2 .f:last-child { margin-left: 15px; width: 92px; }
.row-head { padding-left: 3px; letter-spacing: .25px; }
.row-head .arrow-sm { margin-right: 2px; }
.ibtn { display: block; width: 307px; height: 18px; margin: 3px 0 0 13px; border: 1px solid #4f4f4f; border-radius: 3px; background: linear-gradient(#f8f8f8, #bdbdbd); letter-spacing: .5px; text-align: center; }
.ibtn-first { margin-top: 4px; }
.compfoot { margin-top: 6px; height: 10px; border-top: 1px solid #8f8f8f; display: flex; padding: 4px 16px 0 16px; gap: 5px; }
.cf-doc { width: 13px; height: 8px; }
.cf-chk { width: 12px; height: 8px; }
.cf-fill { flex: 1; }
.cf-blue { width: 13px; height: 8px; }
.cf-gear { width: 8px; height: 8px; }
.scrollbar { width: 14px; flex: none; display: flex; flex-direction: column; align-items: center; padding-top: 4px; }
.sc-up { width: 0; height: 0; border: 3.500px solid transparent; border-bottom: 6px solid #333; border-top-width: 0; flex: none; }
.sc-down { width: 0; height: 0; border: 3.500px solid transparent; border-top: 6px solid #333; border-bottom-width: 0; flex: none; margin-top: 7px; }
.sc-track { width: 14px; height: 860px; margin-top: 8px; background: linear-gradient(90deg, #bdbdbd, #e4e4e4 45%, #c6c6c6); border-radius: 7px; padding-top: 208px; flex: none; }
.sc-thumb { width: 14px; height: 414px; border-radius: 7px; background: linear-gradient(90deg, #5a76a0, #7f97bd 50%, #5f7aa3); border: 1px solid #5c6f8e; }

.status { height: 19px; flex: none; background: #a2a2a2; }
```
